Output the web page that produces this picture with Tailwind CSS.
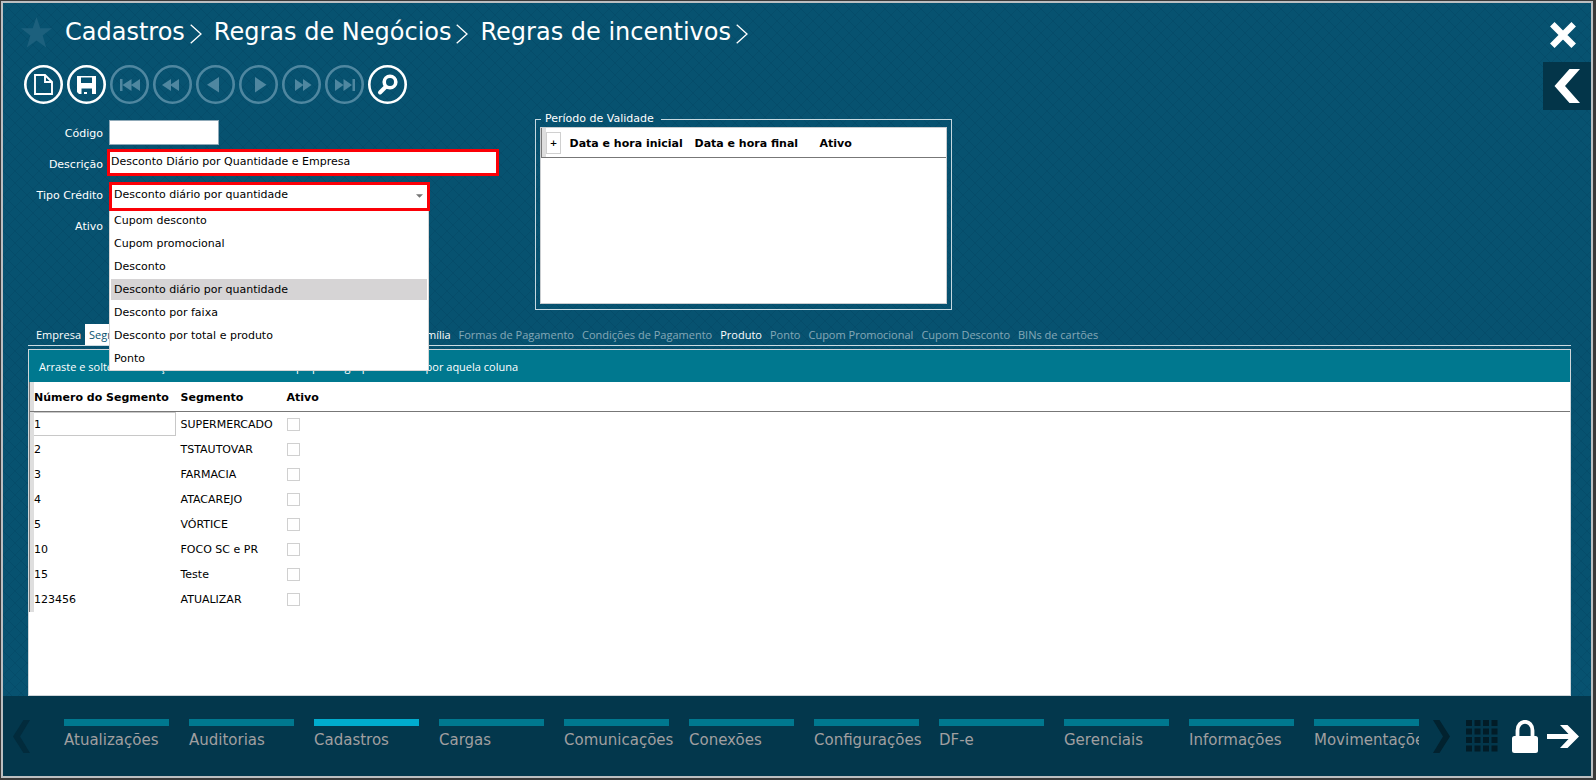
<!DOCTYPE html>
<html lang="pt-BR">
<head>
<meta charset="utf-8">
<title>Regras de incentivos</title>
<script src="https://cdn.jsdelivr.net/npm/@tailwindcss/browser@4"></script>
</head>
<body class="font-['DejaVu_Sans',Verdana,sans-serif] text-[11px] leading-4">
<div class="flex min-h-screen flex-col bg-[#3a3a3a] pt-px pr-[3px] pb-0.5 pl-px">
<div class="flex flex-1 flex-col border-2 border-[#bcbfc1] bg-[#075270] bg-[linear-gradient(45deg,transparent_46%,#04446060_46%_54%,transparent_54%),linear-gradient(-45deg,transparent_46%,#04446060_46%_54%,transparent_54%)] bg-size-[12px_12px]">

  <header>
    <div class="flex h-[59px] items-center pr-[15px] pl-[18px]">
      <button type="button" aria-label="Favorito"><svg class="h-[31px] w-[31px]" viewBox="0 0 31 31" fill="#1c607d"><path d="M15.500 0l3.800 11.200H31l-9.300 7.200L25.200 30.500l-9.700-7L5.800 30.500l3.500-12.100L0 11.200h11.700z"/></svg></button>
      <nav class="ml-[13px] flex items-center pb-0.5 text-2xl text-white" aria-label="Trilha">
        <a href="#">Cadastros</a>
        <svg class="mt-1 mr-3 ml-[5px] h-5 w-3" viewBox="0 0 12 20" fill="none" stroke="#fff" stroke-width="1.300"><path d="M.7 .8L11 10 .7 19.200"/></svg>
        <a href="#">Regras de Negócios</a>
        <svg class="mt-1 mr-3 ml-[5px] h-5 w-3" viewBox="0 0 12 20" fill="none" stroke="#fff" stroke-width="1.300"><path d="M.7 .8L11 10 .7 19.200"/></svg>
        <a href="#">Regras de incentivos</a>
        <svg class="mt-1 ml-[5px] h-5 w-3" viewBox="0 0 12 20" fill="none" stroke="#fff" stroke-width="1.300"><path d="M.7 .8L11 10 .7 19.200"/></svg>
      </nav>
      <button type="button" class="mt-1 ml-auto" aria-label="Fechar"><svg class="h-[26px] w-[26px]" viewBox="0 0 26 26" fill="none" stroke="#fff" stroke-width="6.400"><path d="M2.300 2.300l21.400 21.400M23.700 2.300L2.300 23.700"/></svg></button>
    </div>
    <div class="flex h-12 items-center justify-between">
      <div class="flex gap-1 pb-[3px] pl-[21px] text-white">
        <button type="button" aria-label="Novo"><svg class="h-[39px] w-[39px]" viewBox="0 0 39 39" fill="none" stroke="currentColor"><circle cx="19.500" cy="19.500" r="18.200" stroke-width="2.600"/><path d="M11 10h10l7 7v12H11zM21 10v7h7" stroke-width="1.900"/></svg></button>
        <button type="button" aria-label="Salvar"><svg class="h-[39px] w-[39px]" viewBox="0 0 39 39" fill="none" stroke="currentColor"><circle cx="19.500" cy="19.500" r="18.200" stroke-width="2.600"/><path fill="currentColor" fill-rule="evenodd" stroke="none" d="M10 11h19v18h-4v-5.500H14.500V29H12l-2-2zM14 12.500v5.500h11v-5.500zM17 27h3v2h-3z"/></svg></button>
        <button type="button" disabled class="text-[#4f87a0]" aria-label="Primeiro"><svg class="h-[39px] w-[39px]" viewBox="0 0 39 39" fill="currentColor"><circle cx="19.500" cy="19.500" r="18.200" fill="none" stroke="currentColor" stroke-width="2.600"/><path d="M10 14h2.500v12H10zM21.500 14v12l-9-6zM30 14v12l-9-6z"/></svg></button>
        <button type="button" disabled class="text-[#4f87a0]" aria-label="Retroceder"><svg class="h-[39px] w-[39px]" viewBox="0 0 39 39" fill="currentColor"><circle cx="19.500" cy="19.500" r="18.200" fill="none" stroke="currentColor" stroke-width="2.600"/><path d="M18 14v12l-9-6zM26 14v12l-9-6z"/></svg></button>
        <button type="button" disabled class="text-[#4f87a0]" aria-label="Anterior"><svg class="h-[39px] w-[39px]" viewBox="0 0 39 39" fill="currentColor"><circle cx="19.500" cy="19.500" r="18.200" fill="none" stroke="currentColor" stroke-width="2.600"/><path d="M23 12v15.500L11 19.700z"/></svg></button>
        <button type="button" disabled class="text-[#4f87a0]" aria-label="Próximo"><svg class="h-[39px] w-[39px]" viewBox="0 0 39 39" fill="currentColor"><circle cx="19.500" cy="19.500" r="18.200" fill="none" stroke="currentColor" stroke-width="2.600"/><path d="M16 12v15.500l11.500-7.800z"/></svg></button>
        <button type="button" disabled class="text-[#4f87a0]" aria-label="Avançar"><svg class="h-[39px] w-[39px]" viewBox="0 0 39 39" fill="currentColor"><circle cx="19.500" cy="19.500" r="18.200" fill="none" stroke="currentColor" stroke-width="2.600"/><path d="M13 14v12l8.500-6zM21 14v12l8.500-6z"/></svg></button>
        <button type="button" disabled class="text-[#4f87a0]" aria-label="Último"><svg class="h-[39px] w-[39px]" viewBox="0 0 39 39" fill="currentColor"><circle cx="19.500" cy="19.500" r="18.200" fill="none" stroke="currentColor" stroke-width="2.600"/><path d="M10 14v12l8.500-6zM18.500 14v12l8.500-6zM27.500 14H30v12h-2.500z"/></svg></button>
        <button type="button" aria-label="Pesquisar"><svg class="h-[39px] w-[39px]" viewBox="0 0 39 39" fill="none" stroke="currentColor"><circle cx="19.500" cy="19.500" r="18.200" stroke-width="2.600"/><circle cx="22" cy="17" r="5.800" stroke-width="3.600"/><path d="M17.500 22l-5.500 5.500" stroke-width="4" stroke-linecap="round"/></svg></button>
      </div>
      <button type="button" class="flex h-12 w-12 items-center justify-center bg-[#033549]" aria-label="Abrir painel"><svg class="h-[34px] w-[26px]" viewBox="0 0 26 34" fill="#fff"><path d="M15.500 0H26L11 17l15 17H15.500L.5 17z"/></svg></button>
    </div>
  </header>

  <main class="flex flex-1 flex-col">
    <form class="flex h-[214px] items-start">
      <div class="grid w-[532px] grid-cols-[100px_1fr] gap-x-1 pt-2 text-white">
        <label for="codigo" class="flex h-[31px] items-center justify-end">Código</label>
        <div class="flex h-[31px] items-center pb-0.5 pl-0.5"><input id="codigo" class="h-[25px] w-[110px] border border-[#8fa9b8] bg-white px-1 text-black"></div>
        <label for="descricao" class="flex h-[31px] items-center justify-end">Descrição</label>
        <div class="h-[31px]"><input id="descricao" value="Desconto Diário por Quantidade e Empresa" class="h-[27px] w-[392px] border-3 border-[#fb0007] bg-white px-px pb-0.5 text-black"></div>
        <label for="tipo" class="flex h-[31px] items-center justify-end">Tipo Crédito</label>
        <div class="flex h-[31px] items-end pl-0.5">
          <div class="relative">
            <select id="tipo" class="block h-[29px] w-[321px] appearance-none border-3 border-[#fb0007] bg-white px-0.5 pb-1 text-black">
              <option>Cupom desconto</option><option>Cupom promocional</option><option>Desconto</option><option selected>Desconto diário por quantidade</option><option>Desconto por faixa</option><option>Desconto por total e produto</option><option>Ponto</option>
            </select>
            <svg class="pointer-events-none absolute top-3 right-[7px] h-1 w-[7px]" viewBox="0 0 8 4" fill="#757575"><path d="M0 0h8L4 4z"/></svg>
            <ul role="listbox" aria-label="Tipo Crédito" class="absolute top-full left-0 z-10 w-80 border border-t-0 border-[#d6d6d6] bg-white px-px text-black">
              <li role="option" class="mb-0.5 h-5 px-[3px] pt-0.5">Cupom desconto</li>
              <li role="option" class="my-0.5 h-[21px] px-[3px] pt-[3px]">Cupom promocional</li>
              <li role="option" class="my-0.5 h-[21px] px-[3px] pt-[3px]">Desconto</li>
              <li role="option" aria-selected="true" class="my-0.5 h-[21px] bg-[#d6d4d5] px-[3px] pt-[3px]">Desconto diário por quantidade</li>
              <li role="option" class="my-0.5 h-[21px] px-[3px] pt-[3px]">Desconto por faixa</li>
              <li role="option" class="my-0.5 h-[21px] px-[3px] pt-[3px]">Desconto por total e produto</li>
              <li role="option" class="mt-0.5 h-[22px] px-[3px] pt-[3px]">Ponto</li>
            </ul>
          </div>
        </div>
        <span class="flex h-[31px] items-center justify-end">Ativo</span>
      </div>
      <fieldset class="mt-px w-[417px] border border-[#c5d8e0] px-1 pb-[5px]">
        <legend class="ml-px pt-px pr-[7px] pb-px pl-1 leading-[14px] text-white">Período de Validade</legend>
        <div class="h-[177px] border border-[#c9cdd0] bg-white">
          <table class="w-full border-collapse text-left text-black">
            <thead><tr class="h-[29px] border-b border-[#777]">
              <th class="w-7 border-l border-[#777] p-0"><div class="flex h-[29px] items-center border-l-4 border-[#dedede]"><button type="button" class="h-[22px] w-[15px] border border-[#d0d0d0] text-[9px] leading-5" aria-label="Adicionar">+</button></div></th>
              <th class="w-[125px] p-0 pt-0.5 whitespace-nowrap">Data e hora inicial</th>
              <th class="w-[125px] p-0 pt-0.5 whitespace-nowrap">Data e hora final</th>
              <th class="p-0 pt-0.5">Ativo</th>
            </tr></thead>
          </table>
        </div>
      </fieldset>
    </form>

    <div class="mr-5 ml-[25px] flex flex-1 flex-col font-['Open_Sans','Segoe_UI',sans-serif]">
      <div role="tablist" class="flex h-[22px] border-b border-white/80 pl-1 text-[11px] whitespace-nowrap text-white/50">
        <button type="button" role="tab" class="px-1 text-white">Empresa</button>
        <button type="button" role="tab" aria-selected="true" class="bg-white px-1 text-[#075270]">Segmento</button>
        <button type="button" role="tab" class="px-1 text-white">Departamento</button>
        <button type="button" role="tab" class="px-1 text-white">Seções</button>
        <button type="button" role="tab" class="px-1 text-white">Marca</button>
        <button type="button" role="tab" class="px-1 text-white">Grupo</button>
        <button type="button" role="tab" class="px-1 text-white">Subgrupo</button>
        <button type="button" role="tab" class="px-1 text-white">Família</button>
        <button type="button" role="tab" class="px-1">Formas de Pagamento</button>
        <button type="button" role="tab" class="px-1">Condições de Pagamento</button>
        <button type="button" role="tab" class="px-1 text-white">Produto</button>
        <button type="button" role="tab" class="px-1">Ponto</button>
        <button type="button" role="tab" class="px-1">Cupom Promocional</button>
        <button type="button" role="tab" class="px-1">Cupom Desconto</button>
        <button type="button" role="tab" class="px-1">BINs de cartões</button>
      </div>
      <div class="mt-[3px] flex flex-1 flex-col border border-[#cfd6da] bg-white">
        <p class="flex h-8 items-center bg-[#00788f] pt-0.5 pl-2.5 text-[11px] text-white">Arraste e solte um cabeçalho de uma coluna no topo para agrupar a tabela por aquela coluna</p>
        <table class="w-full table-fixed border-collapse text-left font-['DejaVu_Sans',Verdana,sans-serif] text-black">
          <colgroup><col class="w-[147px]"><col class="w-[106px]"><col></colgroup>
          <thead><tr class="h-[29px] border-b border-[#777]">
            <th class="border-l border-[#777] p-0 whitespace-nowrap"><div class="flex h-[29px] items-center border-l-4 border-[#dedede] pt-0.5">Número do Segmento</div></th>
            <th class="p-0 pt-0.5 pl-1">Segmento</th><th class="p-0 pt-0.5 pl-1">Ativo</th>
          </tr></thead>
          <tbody>
            <tr class="h-[25px]"><td class="border-l border-[#777] p-0"><div class="flex h-[25px] items-start border-l-4 border-[#dedede]"><span class="mr-px h-6 flex-1 border border-l-0 border-[#c8c8c8] pt-1">1</span></div></td><td class="p-0 pl-1">SUPERMERCADO</td><td class="p-0 pl-1"><input type="checkbox" aria-label="Ativo 1" class="block h-[13px] w-[13px] appearance-none border border-[#d0d0d0]"></td></tr>
            <tr class="h-[25px]"><td class="border-l border-[#777] p-0"><div class="flex h-[25px] items-center border-l-4 border-[#dedede] pt-px">2</div></td><td class="p-0 pt-px pl-1">TSTAUTOVAR</td><td class="p-0 pl-1"><input type="checkbox" aria-label="Ativo 2" class="block h-[13px] w-[13px] appearance-none border border-[#d0d0d0]"></td></tr>
            <tr class="h-[25px]"><td class="border-l border-[#777] p-0"><div class="flex h-[25px] items-center border-l-4 border-[#dedede] pt-px">3</div></td><td class="p-0 pt-px pl-1">FARMACIA</td><td class="p-0 pl-1"><input type="checkbox" aria-label="Ativo 3" class="block h-[13px] w-[13px] appearance-none border border-[#d0d0d0]"></td></tr>
            <tr class="h-[25px]"><td class="border-l border-[#777] p-0"><div class="flex h-[25px] items-center border-l-4 border-[#dedede] pt-px">4</div></td><td class="p-0 pt-px pl-1">ATACAREJO</td><td class="p-0 pl-1"><input type="checkbox" aria-label="Ativo 4" class="block h-[13px] w-[13px] appearance-none border border-[#d0d0d0]"></td></tr>
            <tr class="h-[25px]"><td class="border-l border-[#777] p-0"><div class="flex h-[25px] items-center border-l-4 border-[#dedede] pt-px">5</div></td><td class="p-0 pt-px pl-1">VÓRTICE</td><td class="p-0 pl-1"><input type="checkbox" aria-label="Ativo 5" class="block h-[13px] w-[13px] appearance-none border border-[#d0d0d0]"></td></tr>
            <tr class="h-[25px]"><td class="border-l border-[#777] p-0"><div class="flex h-[25px] items-center border-l-4 border-[#dedede] pt-px">10</div></td><td class="p-0 pt-px pl-1">FOCO SC e PR</td><td class="p-0 pl-1"><input type="checkbox" aria-label="Ativo 10" class="block h-[13px] w-[13px] appearance-none border border-[#d0d0d0]"></td></tr>
            <tr class="h-[25px]"><td class="border-l border-[#777] p-0"><div class="flex h-[25px] items-center border-l-4 border-[#dedede] pt-px">15</div></td><td class="p-0 pt-px pl-1">Teste</td><td class="p-0 pl-1"><input type="checkbox" aria-label="Ativo 15" class="block h-[13px] w-[13px] appearance-none border border-[#d0d0d0]"></td></tr>
            <tr class="h-[25px]"><td class="border-l border-[#777] p-0"><div class="flex h-[25px] items-center border-l-4 border-[#dedede] pt-px">123456</div></td><td class="p-0 pt-px pl-1">ATUALIZAR</td><td class="p-0 pl-1"><input type="checkbox" aria-label="Ativo 123456" class="block h-[13px] w-[13px] appearance-none border border-[#d0d0d0]"></td></tr>
          </tbody>
        </table>
      </div>
    </div>
  </main>

  <footer class="flex h-20 items-center bg-[#03374c] pr-3 pl-2.5">
    <button type="button" aria-label="Anteriores"><svg class="h-[33px] w-[17px]" viewBox="0 0 17 33" fill="#022b3c"><path d="M10.500 0H17L7 16.500 17 33h-6.500L0 16.500z"/></svg></button>
    <nav class="ml-[34px] flex w-0 flex-1 gap-5 overflow-hidden text-[15px] leading-7 whitespace-nowrap text-[#a09fa0]" aria-label="Módulos">
      <a href="#" class="w-[105px] shrink-0 border-t-7 border-[#00788f]">Atualizações</a>
      <a href="#" class="w-[105px] shrink-0 border-t-7 border-[#00788f]">Auditorias</a>
      <a href="#" class="w-[105px] shrink-0 border-t-7 border-[#00acce]">Cadastros</a>
      <a href="#" class="w-[105px] shrink-0 border-t-7 border-[#00788f]">Cargas</a>
      <a href="#" class="w-[105px] shrink-0 border-t-7 border-[#00788f]">Comunicações</a>
      <a href="#" class="w-[105px] shrink-0 border-t-7 border-[#00788f]">Conexões</a>
      <a href="#" class="w-[105px] shrink-0 border-t-7 border-[#00788f]">Configurações</a>
      <a href="#" class="w-[105px] shrink-0 border-t-7 border-[#00788f]">DF-e</a>
      <a href="#" class="w-[105px] shrink-0 border-t-7 border-[#00788f]">Gerenciais</a>
      <a href="#" class="w-[105px] shrink-0 border-t-7 border-[#00788f]">Informações</a>
      <a href="#" class="w-[105px] shrink-0 border-t-7 border-[#00788f]">Movimentações</a>
    </nav>
    <div class="ml-3.5 flex items-center">
      <button type="button" aria-label="Próximos"><svg class="h-[33px] w-[17px]" viewBox="0 0 17 33" fill="#02222f"><path d="M6.500 0H0l10 16.500L0 33h6.500L17 16.500z"/></svg></button>
      <button type="button" class="ml-4" aria-label="Grade"><svg class="h-8 w-8" viewBox="0 0 32 32" fill="none" stroke="#021c27" stroke-width="6"><path stroke-dasharray="6 2.500" d="M0 3h32M0 11.500h32M0 20h32M0 28.500h32"/></svg></button>
      <button type="button" class="ml-3.5" aria-label="Bloquear"><svg class="h-[33px] w-[26px]" viewBox="0 0 26 33"><path d="M5.500 17V10.500C5.500 5 9 1.800 13 1.800s7.500 3.200 7.500 8.700V17" fill="none" stroke="#fff" stroke-width="3.800"/><rect y="16" width="26" height="17" rx="2.500" fill="#fff"/></svg></button>
      <button type="button" class="ml-[9px]" aria-label="Sair"><svg class="h-[23px] w-8" viewBox="0 0 32 23" fill="#fff"><path d="M0 9h21.500L13 0h7.500L32 11.500 20.500 23H13l8.500-9H0z"/></svg></button>
    </div>
  </footer>
</div>
</div>
</body>
</html>
